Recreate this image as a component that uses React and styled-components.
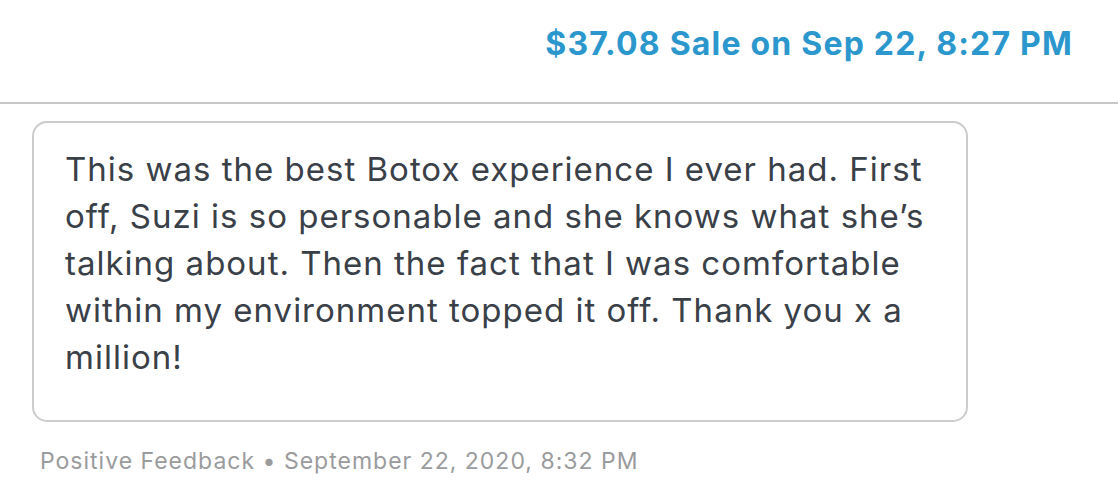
import React from 'react';
import styled, { createGlobalStyle } from 'styled-components';

const GlobalStyle = createGlobalStyle`
  body {
    margin: 0;
    background: #fff;
    font-family: Inter, "Liberation Sans", Arial, sans-serif;
  }
`;

const review = {
  amount: '$37.08',
  sale: 'Sale on Sep 22, 8:27 PM',
  text: 'This was the best Botox experience I ever had. First off, Suzi is so personable and she knows what she\u2019s talking about. Then the fact that I was comfortable within my environment topped it off. Thank you x a million!',
  kind: 'Positive Feedback',
  date: 'September 22, 2020, 8:32 PM',
};

const App = () => {
  return (
    <Page>
      <GlobalStyle />
      <Header>
        <SaleLink>{review.amount} {review.sale}</SaleLink>
      </Header>
      <Body>
        <Bubble>{review.text}</Bubble>
        <Meta>{review.kind} • {review.date}</Meta>
      </Body>
    </Page>
  );
};

export default App;

const Page = styled.div`
  width: 1118px;
  height: 484px;
  overflow: hidden;
`;

const Header = styled.div`
  display: flex;
  justify-content: flex-end;
  align-items: flex-start;
  height: 78px;
  padding: 24px 45px 0 0;
  border-bottom: 2px solid #c6c7c9;
`;

const SaleLink = styled.a`
  color: #2b97cd;
  font-weight: 700;
  font-size: 32px;
  letter-spacing: 1.2px;
  cursor: pointer;
`;

const Body = styled.div`
  padding: 17px 0 0 32px;
`;

const Bubble = styled.div`
  width: 936px;
  box-sizing: border-box;
  border: 2px solid #cbcccd;
  border-radius: 15px;
  padding: 23px 34px 39px 31px;
  font-size: 33px;
  line-height: 47px;
  letter-spacing: 1px;
  color: #3a4048;
`;

const Meta = styled.div`
  margin: 25px 0 0 8px;
  font-size: 23px;
  letter-spacing: 1px;
  color: #9a9b9d;
`;
